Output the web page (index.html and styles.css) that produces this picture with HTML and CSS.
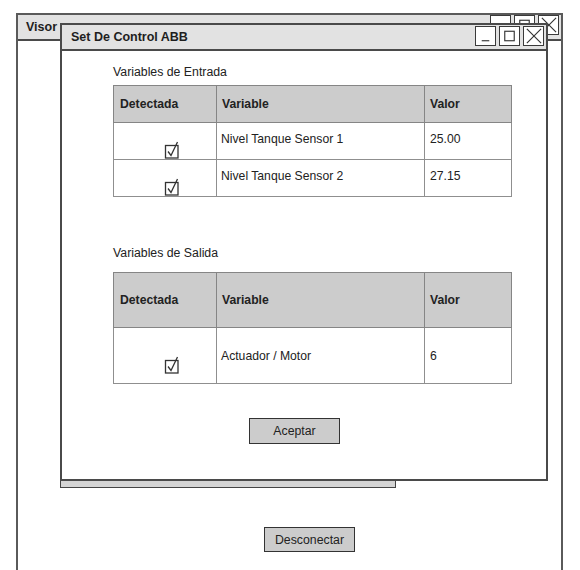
FILE: index.html
```html
<!DOCTYPE html>
<html lang="es">
<head>
<meta charset="utf-8">
<title>Visor</title>
<link rel="stylesheet" href="styles.css">
</head>
<body>
<div class="desktop">
  <section class="win win-outer">
    <header class="titlebar">
      <span class="title">Visor</span>
      <div class="controls">
        <span class="ctl"><svg viewBox="0 0 20 19"><path d="M6 14.5H14"/></svg></span>
        <span class="ctl"><svg viewBox="0 0 20 19"><rect x="5" y="4.5" width="10" height="10"/></svg></span>
        <span class="ctl"><svg viewBox="0 0 20 19"><path d="M3 2L18 17M18 2L3 17"/></svg></span>
      </div>
    </header>
    <div class="win-body outer-body">
      <button class="btn btn-disconnect">Desconectar</button>
    </div>
  </section>

  <div class="tabstrip"></div>

  <section class="win win-inner">
    <header class="titlebar">
      <span class="title">Set De Control ABB</span>
      <div class="controls">
        <span class="ctl"><svg viewBox="0 0 20 19"><path d="M6 14.5H14"/></svg></span>
        <span class="ctl"><svg viewBox="0 0 20 19"><rect x="5" y="4.5" width="10" height="10"/></svg></span>
        <span class="ctl"><svg viewBox="0 0 20 19"><path d="M3 2L18 17M18 2L3 17"/></svg></span>
      </div>
    </header>
    <div class="win-body inner-body">
      <p class="section-label">Variables de Entrada</p>
      <table class="grid grid-in">
        <colgroup><col class="c1"><col class="c2"><col class="c3"></colgroup>
        <thead>
          <tr><th>Detectada</th><th>Variable</th><th>Valor</th></tr>
        </thead>
        <tbody>
          <tr>
            <td class="chk"><svg class="checkbox" viewBox="0 0 16 18"><rect x="1.5" y="4.5" width="12.5" height="12.5"/><path d="M4 10.5L7 14.5L13.5 1"/></svg></td>
            <td>Nivel Tanque Sensor 1</td>
            <td>25.00</td>
          </tr>
          <tr>
            <td class="chk"><svg class="checkbox" viewBox="0 0 16 18"><rect x="1.5" y="4.5" width="12.5" height="12.5"/><path d="M4 10.5L7 14.5L13.5 1"/></svg></td>
            <td>Nivel Tanque Sensor 2</td>
            <td>27.15</td>
          </tr>
        </tbody>
      </table>

      <p class="section-label label-out">Variables de Salida</p>
      <table class="grid grid-out">
        <colgroup><col class="c1"><col class="c2"><col class="c3"></colgroup>
        <thead>
          <tr><th>Detectada</th><th>Variable</th><th>Valor</th></tr>
        </thead>
        <tbody>
          <tr>
            <td class="chk"><svg class="checkbox" viewBox="0 0 16 18"><rect x="1.5" y="4.5" width="12.5" height="12.5"/><path d="M4 10.5L7 14.5L13.5 1"/></svg></td>
            <td>Actuador / Motor</td>
            <td>6</td>
          </tr>
        </tbody>
      </table>

      <button class="btn btn-accept">Aceptar</button>
    </div>
  </section>
</div>
</body>
</html>
```

FILE: styles.css
```css
* { box-sizing: border-box; }

html, body {
  margin: 0;
  padding: 0;
  background: #fff;
  overflow: hidden;
}

body {
  font-family: "Liberation Sans", Arial, sans-serif;
  font-size: 12px;
  color: #222;
}

.desktop {
  position: relative;
  width: 580px;
  height: 570px;
  overflow: hidden;
}

.win {
  position: absolute;
  background: #fff;
  border: 2px solid #4a4a4a;
  display: flex;
  flex-direction: column;
}

.win-outer {
  left: 16px;
  top: 13px;
  width: 547px;
  height: 620px;
  border-color: #5a5a5a;
  z-index: 1;
}

.win-inner {
  left: 60px;
  top: 23px;
  width: 488px;
  height: 458px;
  z-index: 3;
}

.titlebar {
  height: 26px;
  flex: none;
  background: #e2e2e2;
  border-bottom: 2px solid #4a4a4a;
  display: flex;
  align-items: center;
  justify-content: space-between;
  padding: 0 2px 0 9px;
}

.win-outer .titlebar { padding-left: 8px; }

.title {
  font-weight: bold;
  font-size: 12.5px;
  color: #1e1e1e;
}

.controls {
  display: flex;
  gap: 3px;
  align-self: flex-start;
  margin-top: 1px;
}

.win-outer .controls { margin-top: 0; }

.ctl {
  display: block;
  width: 21px;
  height: 20px;
  border: 1.5px solid #3a3a3a;
  background: #fff;
}

.ctl svg {
  display: block;
  width: 100%;
  height: 100%;
  fill: none;
  stroke: #333;
  stroke-width: 1.2;
}

.outer-body {
  flex: 1;
  display: flex;
  justify-content: center;
  align-items: flex-start;
  padding: 486px 0 0 40px;
}

.inner-body {
  flex: 1;
  padding: 13px 0 0 51px;
  display: flex;
  flex-direction: column;
  align-items: flex-start;
}

.section-label {
  margin: 0;
  line-height: 16px;
  font-size: 12.3px;
  color: #222;
}

.label-out { margin-top: 48px; }

.grid {
  border-collapse: collapse;
  width: 398px;
  table-layout: fixed;
  margin-top: 5px;
}

.grid-out { margin-top: 11px; }

.grid .c1 { width: 103px; }
.grid .c2 { width: 208px; }
.grid .c3 { width: 87px; }

.grid th,
.grid td {
  border: 1px solid #8f8f8f;
  text-align: left;
  vertical-align: middle;
  padding: 0 5px;
  font-size: 12.2px;
  color: #222;
}

.grid th {
  background: #cccccc;
  font-weight: bold;
  font-size: 12.2px;
  border-color: #858585;
}

.grid th:first-child { padding-left: 6px; }
.grid td:nth-child(2) { padding-left: 4px; }

.grid-in th { height: 37px; }
.grid-in td { height: 37px; padding-bottom: 5px; }

.grid-out th { height: 55px; }
.grid-out td { height: 56px; }

.grid td.chk {
  text-align: center;
  padding: 18px 0 0 14px;
}

.checkbox {
  display: inline-block;
  width: 16px;
  height: 18px;
  vertical-align: middle;
  fill: #fff;
  stroke: #333;
  stroke-width: 1.3;
}

.checkbox path { fill: none; }

.btn {
  font-family: "Liberation Sans", Arial, sans-serif;
  font-size: 12.3px;
  color: #222;
  background: #cccccc;
  border: 1.5px solid #333;
  width: 91px;
  height: 26px;
  padding: 0;
  border-radius: 0;
}

.btn-accept {
  margin: 34px 0 0 136px;
}

.btn-disconnect {
  height: 25px;
}

.tabstrip {
  position: absolute;
  left: 60px;
  top: 479px;
  width: 336px;
  height: 9px;
  background: #d4d4d4;
  border: 1.5px solid #444;
  border-top: none;
  z-index: 2;
}
```
